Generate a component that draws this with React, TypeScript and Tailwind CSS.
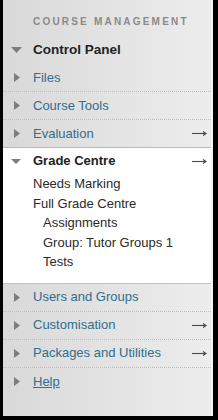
const font = { fontFamily: '"Liberation Sans", Arial, sans-serif' };

function RightTri() {
  return (
    <svg width="6" height="9" viewBox="0 0 6 9" className="block">
      <polygon points="0,0 6,4.5 0,9" fill="#7d7d7d" />
    </svg>
  );
}

function DownTri({ small }: { small?: boolean }) {
  return small ? (
    <svg width="10" height="5" viewBox="0 0 10 5" className="block">
      <polygon points="0,0 10,0 5,5" fill="#7d7d7d" />
    </svg>
  ) : (
    <svg width="11" height="6" viewBox="0 0 11 6" className="block">
      <polygon points="0,0 11,0 5.5,6" fill="#7d7d7d" />
    </svg>
  );
}

function Arrow() {
  return (
    <svg width="15" height="7" viewBox="0 0 15 7" className="block">
      <line x1="0" y1="3.5" x2="13.5" y2="3.5" stroke="#4a4a4a" strokeWidth="1.1" />
      <polyline points="11,1.5 14,3.5 11,5.5" fill="none" stroke="#4a4a4a" strokeWidth="1.1" />
    </svg>
  );
}

type Item = { label: string; arrow?: boolean; underline?: boolean; last?: boolean };

function Row({ item, solid }: { item: Item; solid?: boolean }) {
  return (
    <div
      className={`flex items-center h-[28px] ${
        item.last ? '' : solid ? 'border-b border-[#b9b9b9]' : 'border-b border-dotted border-[#bdbdbd]'
      }`}
    >
      <div className="w-[30px] pl-[11px] flex items-center">
        <RightTri />
      </div>
      <span className={`flex-1 text-[13px] text-[#2f6e8e] ${item.underline ? 'underline' : ''}`}>{item.label}</span>
      {item.arrow && (
        <div className="pr-[4px]">
          <Arrow />
        </div>
      )}
    </div>
  );
}

export default function App() {
  const top: Item[] = [{ label: 'Course Tools' }, { label: 'Evaluation', arrow: true }];
  const bottom: Item[] = [
    { label: 'Users and Groups' },
    { label: 'Customisation', arrow: true },
    { label: 'Packages and Utilities', arrow: true },
    { label: 'Help', underline: true, last: true },
  ];
  const grade = [
    { label: 'Needs Marking', sub: false },
    { label: 'Full Grade Centre', sub: false },
    { label: 'Assignments', sub: true },
    { label: 'Group: Tutor Groups 1', sub: true },
    { label: 'Tests', sub: true },
  ];

  return (
    <div className="w-[218px] h-[420px] bg-black pl-[3px] pr-[5px] pb-[4px]" style={font}>
      <div className="h-full flex flex-col bg-gradient-to-r from-[#d9d9d9] to-[#ededed] border-r-2 border-[#f6f6f6]">
        <div className="h-[36px] pt-[16px] pl-[30px]">
          <span className="block text-[10px] leading-[12px] font-bold tracking-[2.2px] text-[#8a8a8a]">
            COURSE MANAGEMENT
          </span>
        </div>

        <div className="flex items-center h-[28px]">
          <div className="w-[30px] pl-[8px] flex items-center">
            <DownTri />
          </div>
          <span className="text-[13.5px] font-bold text-[#222]">Control Panel</span>
        </div>

        <div className="flex items-center h-[28px] border-b border-dotted border-[#bdbdbd]">
          <div className="w-[30px] pl-[11px] flex items-center">
            <RightTri />
          </div>
          <span className="text-[13px] text-[#2f6e8e]">Files</span>
        </div>

        {top.map((it, i) => (
          <Row key={it.label} item={it} solid={i === top.length - 1} />
        ))}

        <div className="bg-white pb-[11px] border-b border-[#c4c4c4]">
          <div className="flex items-center h-[26px]">
            <div className="w-[30px] pl-[8px] flex items-center">
              <DownTri small />
            </div>
            <span className="flex-1 text-[13px] font-bold text-[#222]">Grade Centre</span>
            <div className="pr-[4px]">
              <Arrow />
            </div>
          </div>
          {grade.map((g) => (
            <div
              key={g.label}
              className={`h-[19.5px] flex items-center text-[13px] text-[#2a2a2a] ${g.sub ? 'pl-[40px]' : 'pl-[30px]'}`}
            >
              {g.label}
            </div>
          ))}
        </div>

        {bottom.map((it) => (
          <Row key={it.label} item={it} />
        ))}
      </div>
    </div>
  );
}
